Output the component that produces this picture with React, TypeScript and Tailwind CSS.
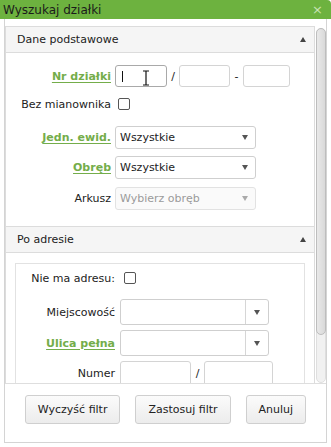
function Arrow({ up, className }: { up?: boolean; className?: string }) {
	return (
		<svg width="6" height="5" viewBox="0 0 6 5" className={className}>
			{up ? <path d="M0 5 L3 0 L6 5 Z" fill="currentColor" /> : <path d="M0 0 L3 5 L6 0 Z" fill="currentColor" />}
		</svg>
	);
}

function Checkbox() {
	return <div className="w-[12px] h-[12px] rounded-[2px] border border-[#555] bg-white" />;
}

function Select({ value, disabled }: { value: string; disabled?: boolean }) {
	return (
		<div
			className={`w-[141px] h-[23px] rounded-[3px] border flex items-center justify-between pl-[4px] pr-[7px] ${
				disabled ? "border-[#e2e2e2] bg-[#fafafa] text-[#9a9a9a]" : "border-[#cfcfcf] bg-white text-[#222]"
			}`}
		>
			<span>{value}</span>
			<Arrow className={disabled ? "text-[#aaa]" : "text-[#555]"} />
		</div>
	);
}

function Combo() {
	return (
		<div className="w-[149px] h-[26px] rounded-[3px] border border-[#cfcfcf] bg-white flex">
			<div className="flex-1" />
			<div className="w-[23px] border-l border-[#d6d6d6] flex items-center justify-center">
				<Arrow className="text-[#555]" />
			</div>
		</div>
	);
}

function GreenLabel({ children }: { children: string }) {
	return <span className="text-[#74ad4a] font-bold underline underline-offset-2">{children}</span>;
}

function PanelHeader({ title }: { title: string }) {
	return (
		<div className="h-[26px] bg-[#f5f5f5] border-b border-[#dcdcdc] flex items-center justify-between pl-[11px] pr-[8px] text-[#222]">
			<span>{title}</span>
			<Arrow up className="text-[#444]" />
		</div>
	);
}

export default function App() {
	const font = { fontFamily: '"DejaVu Sans", Verdana, sans-serif' };
	return (
		<div className="w-[331px] h-[447px] bg-white overflow-hidden text-[11px] leading-none" style={font}>
			{/* title bar */}
			<div className="h-[19px] bg-[#6db23f] rounded-tr-[4px] flex items-center justify-between pl-[3px] pr-[8px]">
				<span className="text-[12px] text-[#1b1b1b]">Wyszukaj działki</span>
				<span className="text-[13px] text-[#c9e3b4]">×</span>
			</div>

			<div className="ml-[4px] w-[323px] h-[424px] border-x border-b border-[#d4d4d4]">
				{/* scroll area */}
				<div className="h-[365px] border-b border-[#dedede] flex overflow-hidden">
					<div className="w-[310px] pt-[7px]">
						<div className="border border-[#dcdcdc]">
							<PanelHeader title="Dane podstawowe" />
							<div className="pt-[12px] pb-[16px] grid grid-cols-[105px_1fr] gap-x-[4px] items-center text-[#222]">
								<div className="text-right h-[22px] flex items-center justify-end">
									<GreenLabel>Nr działki</GreenLabel>
								</div>
								<div className="flex items-center">
									<div className="w-[52px] h-[22px] rounded-[3px] border border-[#a9a9a9] bg-white relative">
										<div className="absolute left-[6px] top-[5px] w-[1px] h-[11px] bg-[#111]" />
										<svg width="8" height="16" viewBox="0 0 8 16" className="absolute left-[26px] top-[4px]">
											<path d="M1 1 H7 M4 1 V15 M1 15 H7" stroke="#111" strokeWidth="1.2" fill="none" />
										</svg>
									</div>
									<span className="w-[12px] text-center">/</span>
									<div className="w-[51px] h-[22px] rounded-[3px] border border-[#d4d4d4] bg-white" />
									<span className="w-[13px] text-center">-</span>
									<div className="w-[47px] h-[22px] rounded-[3px] border border-[#d4d4d4] bg-white" />
								</div>

								<div className="mt-[10px] h-[14px] flex items-center justify-end">Bez mianownika</div>
								<div className="mt-[10px] h-[14px] flex items-center pl-[3px]">
									<Checkbox />
								</div>

								<div className="mt-[15px] h-[23px] flex items-center justify-end">
									<GreenLabel>Jedn. ewid.</GreenLabel>
								</div>
								<div className="mt-[15px]">
									<Select value="Wszystkie" />
								</div>

								<div className="mt-[7px] h-[23px] flex items-center justify-end">
									<GreenLabel>Obręb</GreenLabel>
								</div>
								<div className="mt-[7px]">
									<Select value="Wszystkie" />
								</div>

								<div className="mt-[8px] h-[23px] flex items-center justify-end">Arkusz</div>
								<div className="mt-[8px]">
									<Select value="Wybierz obręb" disabled />
								</div>
							</div>

							<div className="border-t border-[#dcdcdc]">
								<PanelHeader title="Po adresie" />
								<div className="pt-[10px] px-[9px]">
									<div className="border border-[#e2e2e2] h-[140px] pt-[8px] grid grid-cols-[99px_1fr] gap-x-[5px] items-center content-start text-[#222]">
										<div className="h-[12px] flex items-center justify-end">Nie ma adresu:</div>
										<div className="h-[12px] flex items-center pl-[4px]">
											<Checkbox />
										</div>

										<div className="mt-[15px] h-[26px] flex items-center justify-end">Miejscowość</div>
										<div className="mt-[15px]">
											<Combo />
										</div>

										<div className="mt-[5px] h-[26px] flex items-center justify-end">
											<GreenLabel>Ulica pełna</GreenLabel>
										</div>
										<div className="mt-[5px]">
											<Combo />
										</div>

										<div className="mt-[5px] h-[25px] flex items-center justify-end">Numer</div>
										<div className="mt-[5px] flex items-center">
											<div className="w-[71px] h-[25px] rounded-[3px] border border-[#d4d4d4] bg-white" />
											<span className="w-[13px] text-center">/</span>
											<div className="w-[69px] h-[25px] rounded-[3px] border border-[#d4d4d4] bg-white" />
										</div>
									</div>
								</div>
							</div>
						</div>
					</div>

					{/* scrollbar */}
					<div className="w-[11px] pt-[9px] pl-[1px]">
						<div className="w-[10px] h-[355px] rounded-full bg-[#f1f1f1] border border-[#dedede] flex flex-col">
							<div className="h-[307px] rounded-full bg-gradient-to-r from-[#e9e9e9] to-[#d9d9d9] border border-[#bdbdbd] -m-[1px]" />
						</div>
					</div>
				</div>

				{/* footer */}
				<div className="pt-[11px] flex justify-center gap-[15px] text-[#222]">
					<button className="h-[29px] px-[12px] rounded-[3px] border border-[#cfcfcf] bg-gradient-to-b from-[#fbfbfb] to-[#ececec]">
						Wyczyść filtr
					</button>
					<button className="h-[29px] px-[12px] rounded-[3px] border border-[#cfcfcf] bg-gradient-to-b from-[#fbfbfb] to-[#ececec]">
						Zastosuj filtr
					</button>
					<button className="h-[29px] px-[12px] rounded-[3px] border border-[#cfcfcf] bg-gradient-to-b from-[#fbfbfb] to-[#ececec]">
						Anuluj
					</button>
				</div>
			</div>
		</div>
	);
}
